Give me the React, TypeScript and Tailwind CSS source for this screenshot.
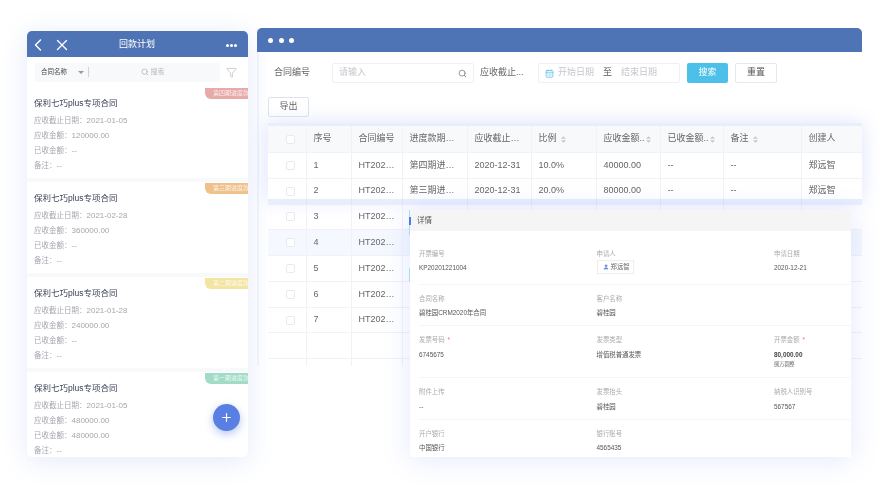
import { ChevronLeft, X, Search, Filter, Plus, CalendarDays, User } from 'lucide-react';

const CARDS = [
  { tag: '第四期进度款', tagClass: 'bg-[#e8a9a9]', date: '2021-01-05', due: '120000.00', got: '--' },
  { tag: '第三期进度款', tagClass: 'bg-[#efc18c]', date: '2021-02-28', due: '360000.00', got: '--' },
  { tag: '第二期进度款', tagClass: 'bg-[#f3e4a2]', date: '2021-01-28', due: '240000.00', got: '--' },
  { tag: '第一期进度款', tagClass: 'bg-[#a2dcc6]', date: '2021-01-05', due: '480000.00', got: '480000.00' },
];

const COLS = 'grid grid-cols-[39px_45px_51px_65px_64px_65px_64px_63px_78px_60px]';
const FIELDS = 'grid grid-cols-[177.5px_177.5px_1fr]';

function SortIcon() {
  return (
    <svg viewBox="0 0 6 8" className="w-[5px] h-[7px] shrink-0 fill-[#c3c8d2]">
      <path d="M3 0 6 3H0zM3 8 0 5h6z" />
    </svg>
  );
}

function Check() {
  return <span className="block w-[9px] h-[9px] rounded-[2px] border border-[#e8eaee] bg-white" />;
}

function Cell({ children, className = '' }: { children?: React.ReactNode; className?: string }) {
  return (
    <div className={`flex items-center gap-[1px] pl-[6.5px] whitespace-nowrap min-w-0 border-r border-[#f1f2f6] last:border-r-0 ${className}`}>
      {children}
    </div>
  );
}

function Row({ no, cells = [], className = '' }: { no?: number; cells?: string[]; className?: string }) {
  return (
    <div className={`${COLS} h-[25.8px] border-b border-[#f0f2f6] text-[9px] text-[#666] ${className}`}>
      <Cell className="justify-center pl-0">{no && <Check />}</Cell>
      <Cell>{no}</Cell>
      <Cell>{no && 'HT202…'}</Cell>
      {Array.from({ length: 7 }).map((_, i) => (
        <Cell key={i}>{cells[i]}</Cell>
      ))}
    </div>
  );
}

function Field({ label, value, req, children }: { label: string; value?: string; req?: boolean; children?: React.ReactNode }) {
  return (
    <div className="text-[6.4px] leading-[9px]">
      <div className="text-[#aaa]">{label}{req && <span className="text-[#f56c6c] ml-[3px]">*</span>}</div>
      {value && <div className="mt-[5.5px] text-[#555]">{value}</div>}
      {children}
    </div>
  );
}

function DetailPanel() {
  return (
    <div className="absolute left-[410px] top-[210px] w-[441px] h-[247px] bg-white shadow-[0_2px_26px_rgba(90,120,250,0.17)]">
      <span className="absolute -left-px top-0 w-px h-[25px] bg-[#a8dcef]" />
      <span className="absolute -left-px top-[58px] w-px h-[14px] bg-[#a8dcef]" />
      <span className="absolute -left-px top-[7px] w-[2px] h-[8px] bg-[#4a7be8]" />
      <div className="h-[21px] bg-[#f5f5f5] flex items-center pl-[7px] text-[7.5px] text-[#555]">详情</div>
      <div className="pl-[9px]">
        <div className={`${FIELDS} h-[53.5px] pt-[17.5px] border-b border-[#f6f6f8]`}>
          <Field label="开票编号" value="KP20201221004" />
          <Field label="申请人">
            <div className="mt-[2.5px] inline-flex items-center gap-[2px] h-[13.5px] w-[37px] pl-[5px] border border-[#eeeeee] text-[#666]">
              <User className="w-[6px] h-[6px] text-[#5a86d8] fill-[#5a86d8]" />
              郑远智
            </div>
          </Field>
          <Field label="申请日期" value="2020-12-21" />
        </div>
        <div className={`${FIELDS} h-[41.5px] pt-[9px] border-b border-[#f6f6f8]`}>
          <Field label="合同名称" value="碧桂园CRM2020年合同" />
          <Field label="客户名称" value="碧桂园" />
        </div>
        <div className={`${FIELDS} h-[52px] pt-[9px] border-b border-[#f6f6f8]`}>
          <Field label="发票号码" value="6745675" req />
          <Field label="发票类型" value="增值税普通发票" />
          <Field label="开票金额" req>
            <div className="mt-[5.5px] text-[#444] font-bold">80,000.00</div>
            <div className="text-[5.2px] leading-[10px] text-[#666]">捌万圆整</div>
          </Field>
        </div>
        <div className={`${FIELDS} h-[41.5px] pt-[9px] border-b border-[#f6f6f8]`}>
          <Field label="附件上传" value="--" />
          <Field label="发票抬头" value="碧桂园" />
          <Field label="纳税人识别号" value="567567" />
        </div>
        <div className={`${FIELDS} pt-[9px]`}>
          <Field label="开户银行" value="中国银行" />
          <Field label="银行账号" value="4565435" />
        </div>
      </div>
    </div>
  );
}

function Phone() {
  return (
    <div className="relative mt-[3px] w-[221px] h-[426px] rounded-[5px] bg-[#f8f9fb] shadow-[0_4px_26px_rgba(90,125,225,0.16)] overflow-hidden shrink-0">
      <div className="h-[26px] pt-[2px] bg-[#4e74b6] flex items-center pl-[1px] pr-[11px] text-white">
        <ChevronLeft className="w-[20px] h-[20px]" strokeWidth={1.8} />
        <X className="ml-[5px] w-[18px] h-[18px]" strokeWidth={1.8} />
        <span className="ml-[48px] text-[9px]">回款计划</span>
        <div className="ml-auto flex gap-[1px]">
          <span className="w-[3px] h-[3px] rounded-full bg-white" />
          <span className="w-[3px] h-[3px] rounded-full bg-white" />
          <span className="w-[3px] h-[3px] rounded-full bg-white" />
        </div>
      </div>
      <div className="h-[30px] bg-white flex items-center pl-[8px] pr-[10px] gap-[6px]">
        <div className="w-[185px] h-[19px] rounded-[2px] bg-[#f8f9fa] flex items-center pl-[6px]">
          <span className="text-[6.5px] text-[#444]">合同名称</span>
          <span className="ml-[11px] w-0 h-0 border-x-[3px] border-x-transparent border-t-[3px] border-t-[#999]" />
          <span className="ml-[3.5px] w-px h-[10px] bg-[#cfd3d8]" />
          <Search className="ml-[52px] w-[8px] h-[8px] text-[#aaa]" />
          <span className="ml-[2px] text-[7px] text-[#bbb]">搜索</span>
        </div>
        <Filter className="w-[11px] h-[11px] text-[#a8adb5]" strokeWidth={1.3} />
      </div>
      <div className="flex flex-col gap-[4px]">
        {CARDS.map((c, i) => (
          <div key={i} className="relative h-[91px] bg-white pl-[7px] pt-[10px] text-[7.5px] text-[#a4a7ae]">
            <span className={`absolute right-0 top-px w-[43px] h-[11px] rounded-bl-[6px] overflow-hidden whitespace-nowrap pl-[8px] text-[6px] leading-[11px] text-white/80 ${c.tagClass}`}>
              {c.tag}
            </span>
            <div className="text-[8.5px] leading-[12px] text-[#3c4257] mb-[4px]">保利七巧plus专项合同</div>
            <div className="h-[15px] leading-[15px]">应收截止日期：<span className="text-[8px]">{c.date}</span></div>
            <div className="h-[15px] leading-[15px]">应收金额：<span className="text-[8px]">{c.due}</span></div>
            <div className="h-[15px] leading-[15px]">已收金额：<span className="text-[8px]">{c.got}</span></div>
            <div className="h-[15px] leading-[15px]">备注：<span className="text-[8px]">--</span></div>
          </div>
        ))}
      </div>
      <button className="absolute left-[186px] top-[373px] w-[27px] h-[27px] rounded-full bg-[#5a7fe3] shadow-[0_3px_8px_rgba(90,127,227,0.45)] flex items-center justify-center text-white">
        <Plus className="w-[13px] h-[13px]" strokeWidth={2.2} />
      </button>
    </div>
  );
}

function Toolbar() {
  return (
    <div className="text-[9px] text-[#666]">
      <div className="flex items-center h-[20px] mt-[11px] pl-[15px]">
        <span className="w-[58px]">合同编号</span>
        <div className="w-[142px] h-[20px] border border-[#eef0f4] rounded-[2px] flex items-center justify-between pl-[6px] pr-[6px] text-[#c4c7cd]">
          请输入
          <Search className="w-[9px] h-[9px] text-[#777]" />
        </div>
        <span className="ml-[6px] w-[58px]">应收截止...</span>
        <div className="w-[142px] h-[20px] border border-[#eef0f4] rounded-[2px] flex items-center pl-[6px] text-[#c4c7cd]">
          <CalendarDays className="w-[9px] h-[9px] text-[#62bde6]" />
          <span className="ml-[4px]">开始日期</span>
          <span className="ml-[9px] text-[#555]">至</span>
          <span className="ml-[9px]">结束日期</span>
        </div>
        <button className="ml-[7px] w-[41px] h-[20px] rounded-[2px] bg-[#4dc0ea] text-white">搜索</button>
        <button className="ml-[7px] w-[42px] h-[20px] rounded-[2px] border border-[#e4e8ef] text-[#555]">重置</button>
      </div>
      <button className="block mt-[14px] ml-[9px] w-[41px] h-[20px] rounded-[2px] border border-[#dfe4ec] text-[#666]">导出</button>
    </div>
  );
}

function Table() {
  return (
    <div className="mt-[6px] ml-[9px] relative">
      <div className="shadow-[0_0_18px_rgba(85,110,240,0.2)] bg-[#eaeefc] pt-[3px]">
        <div className="h-[73px] overflow-hidden bg-white">
          <div className={`${COLS} h-[27px] bg-[#f8f9fa] border-b border-[#f0f2f6] text-[9px] text-[#666]`}>
            <Cell className="justify-center pl-0"><Check /></Cell>
            <Cell>序号</Cell>
            <Cell>合同编号</Cell>
            <Cell>进度款期…</Cell>
            <Cell>应收截止…</Cell>
            <Cell>比例<span className="ml-[3px]"><SortIcon /></span></Cell>
            <Cell>应收金额..<SortIcon /></Cell>
            <Cell>已收金额..<SortIcon /></Cell>
            <Cell>备注<span className="ml-[3px]"><SortIcon /></span></Cell>
            <Cell>创建人</Cell>
          </div>
          <Row no={1} cells={['第四期进…', '2020-12-31', '10.0%', '40000.00', '--', '--', '郑远智']} />
          <Row no={2} cells={['第三期进…', '2020-12-31', '20.0%', '80000.00', '--', '--', '郑远智']} />
        </div>
      </div>
      <div className={`${COLS} h-[5.5px] bg-[#e9eefc]`}>
        {Array.from({ length: 10 }).map((_, i) => (
          <span key={i} className="border-r border-[#dfe5f8] last:border-r-0" />
        ))}
      </div>
      <Row no={3} />
      <Row no={4} className="bg-[#f5f8fe]" />
      <Row no={5} />
      <Row no={6} />
      <Row no={7} />
      <Row />
      <div className={`${COLS} h-[7px]`}>
        {Array.from({ length: 10 }).map((_, i) => (
          <span key={i} className="border-r border-[#f1f2f6] last:border-r-0" />
        ))}
      </div>
    </div>
  );
}

export default function App() {
  return (
    <div className="relative w-[896px] h-[488px] overflow-hidden bg-white font-['Liberation_Sans','Noto_Sans_CJK_SC',sans-serif] blur-[0.4px]">
      <div className="flex items-start gap-[9px] pt-[28px] pl-[27px]">
        <Phone />
        <div className="w-[605px] shrink-0 border-l-2 border-[#f4f6fc]">
          <div className="h-[24px] -ml-[2px] bg-[#4e74b6] rounded-t-[5px] flex items-center gap-[5.5px] pl-[11px]">
            <span className="w-[5px] h-[5px] rounded-full bg-white" />
            <span className="w-[5px] h-[5px] rounded-full bg-white" />
            <span className="w-[5px] h-[5px] rounded-full bg-white" />
          </div>
          <Toolbar />
          <Table />
        </div>
      </div>
      <DetailPanel />
    </div>
  );
}
